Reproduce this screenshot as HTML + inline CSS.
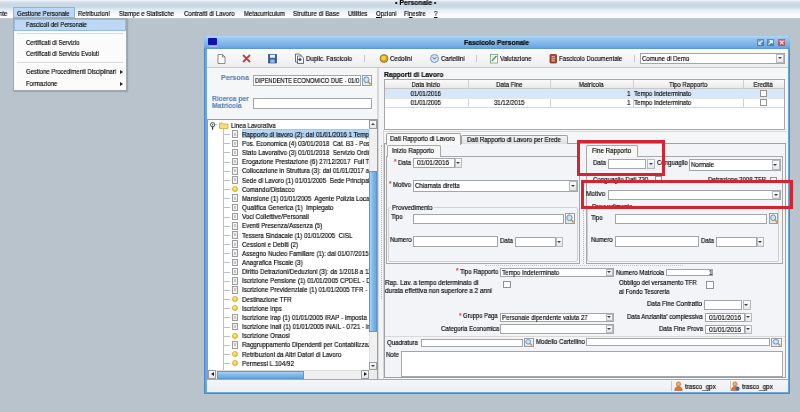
<!DOCTYPE html>
<html><head><meta charset="utf-8"><style>
*{margin:0;padding:0;box-sizing:border-box}
html,body{width:800px;height:412px;overflow:hidden}
body{position:relative;background:#b9c3cb;font-family:"Liberation Sans",sans-serif}
.a{position:absolute}
.t{position:absolute;white-space:pre;line-height:8px;font-size:7.0px;transform:scaleX(0.87);transform-origin:0 0;color:#000;will-change:transform;-webkit-text-stroke-width:0.15px}
.b{font-weight:bold}
.inp{position:absolute;background:#fff;border:1px solid #a2a5a9}
.btn{position:absolute;background:linear-gradient(#fdfdfd,#e2e4e6);border:1px solid #9a9ea3}
.dd{position:absolute;background:linear-gradient(#fcfcfc,#e6e7e9);border:1px solid #b6b9bd}
.dd:after{content:"";position:absolute;left:50%;top:50%;margin:-1.2px 0 0 -2.2px;border-left:2.2px solid transparent;border-right:2.2px solid transparent;border-top:2.6px solid #404040}
.chk{position:absolute;background:#fff;border:1px solid #8f9398}
</style></head><body>
<div style="position:absolute;left:0;top:0;width:800px;height:412px;filter:blur(0.3px)">
<div class="a" style="left:0px;top:0px;width:800.00px;height:18.00px;background:linear-gradient(#f4f8fc 0px,#d9e5ef 1.5px,#c8d8e5 4px,#ccdae6 7px,#e4ecf3 10px,#f6f9fc 14px,#fcfdfe 17px)"></div>
<div class="a" style="left:0px;top:17.5px;width:800.00px;height:1.00px;background:#c0c9d0"></div>
<div class="t b" style="left:394.50px;top:-1.10px;transform:scaleX(0.98)">• Personale •</div>
<div class="t" style="left:-1.00px;top:10.10px;transform:scaleX(0.855)">nte</div>
<div class="a" style="left:13px;top:7px;width:62.00px;height:11.00px;background:#bcd8f4;border:1px solid #8fb6dd"></div>
<div class="t" style="left:17.00px;top:10.10px;transform:scaleX(0.855)">Gestione Personale</div>
<div class="t" style="left:78.00px;top:10.10px;transform:scaleX(0.855)">Retribuzioni</div>
<div class="t" style="left:119.00px;top:10.10px;transform:scaleX(0.855)">Stampe e Statistiche</div>
<div class="t" style="left:184.00px;top:10.10px;transform:scaleX(0.885)">Contratti di Lavoro</div>
<div class="t" style="left:244.00px;top:10.10px;transform:scaleX(0.855)">Metacurriculum</div>
<div class="t" style="left:293.00px;top:10.10px;transform:scaleX(0.89)">Strutture di Base</div>
<div class="t" style="left:348.00px;top:10.10px;transform:scaleX(0.855)">Utilities</div>
<div class="t" style="left:376.00px;top:10.10px;transform:scaleX(0.855)"><u>O</u>pzioni</div>
<div class="t" style="left:404.00px;top:10.10px;transform:scaleX(0.855)">Fi<u>n</u>estre</div>
<div class="t" style="left:434.00px;top:10.10px"><u>?</u></div>
<div class="a" style="left:13px;top:18px;width:114.00px;height:73.00px;background:#fbfbfb;border:1px solid #a0a8b0;box-shadow:1px 1px 1px rgba(0,0,0,.15)"></div>
<div class="a" style="left:14px;top:19px;width:112.00px;height:11.50px;background:#bcd8f4;border:1px solid #94bbe2"></div>
<div class="t" style="left:26.00px;top:21.10px;transform:scaleX(0.845)">Fascicoli del Personale</div>
<div class="a" style="left:17px;top:33px;width:106.00px;height:1.00px;background:#dadada"></div>
<div class="t" style="left:26.00px;top:39.10px;transform:scaleX(0.845)">Certificati di Servizio</div>
<div class="t" style="left:26.00px;top:49.60px;transform:scaleX(0.845)">Certificati di Servizio Evoluti</div>
<div class="a" style="left:17px;top:62px;width:106.00px;height:1.00px;background:#dadada"></div>
<div class="t" style="left:26.00px;top:68.10px;transform:scaleX(0.845)">Gestione Procedimenti Disciplinari</div>
<div class="a" style="left:120px;top:70px;border-top:2px solid transparent;border-bottom:2px solid transparent;border-left:3px solid #222"></div>
<div class="t" style="left:26.00px;top:79.60px;transform:scaleX(0.845)">Formazione</div>
<div class="a" style="left:120px;top:81.5px;border-top:2px solid transparent;border-bottom:2px solid transparent;border-left:3px solid #222"></div>
<div class="a" style="left:204px;top:36px;width:586.00px;height:357.60px;background:#6aa6de;border:1px solid #5288c2;border-top:none;border-radius:2px 2px 0 0"></div>
<div class="a" style="left:204px;top:36px;width:586.00px;height:13.00px;background:linear-gradient(#b4d8f6,#96c6f0 20%,#82b9ea 55%,#6aa7df 88%,#5a92cc);border-radius:2px 2px 0 0"></div>
<div class="a" style="left:208px;top:37.8px;width:9.00px;height:6.80px;background:#1212a8;border-radius:1px"></div>
<div class="a" style="left:208.5px;top:44.6px;width:8.00px;height:2.40px;background:linear-gradient(#8a9ae0,#b0c8f0)"></div>
<div class="t b" style="left:464.00px;top:39.10px;transform:scaleX(0.96)">Fascicolo Personale</div>
<svg class="a" style="left:757px;top:39px" width="7" height="7" viewBox="0 0 7 7"><rect x="0" y="0" width="7" height="7" rx="1" fill="#4b7fb4"/><rect x=".5" y=".5" width="6" height="3" rx="1" fill="#6f9ccc"/><path d="M5.5 1.5L2 5M1.8 2.5v2.7h2.7" stroke="#e8f2fb" stroke-width="1.1" fill="none"/></svg>
<svg class="a" style="left:767px;top:39px" width="7" height="7" viewBox="0 0 7 7"><rect x="0" y="0" width="7" height="7" rx="1" fill="#4b7fb4"/><rect x=".5" y=".5" width="6" height="3" rx="1" fill="#6f9ccc"/><path d="M1.5 5.5L5 2M2.5 1.8h2.7v2.7" stroke="#ffffff" stroke-width="1.1" fill="none"/></svg>
<svg class="a" style="left:777.5px;top:39px" width="7.5" height="7" viewBox="0 0 7.5 7"><rect x="0" y="0" width="7.5" height="7" rx="1" fill="#b8505a"/><rect x=".5" y=".5" width="6.5" height="3" rx="1" fill="#cf7680"/><path d="M2 1.8l3.5 3.5M5.5 1.8l-3.5 3.5" stroke="#fbe8ea" stroke-width="1.2"/></svg>
<div class="a" style="left:207px;top:49px;width:581.00px;height:342.00px;background:#f5f6f8"></div>
<div class="a" style="left:207px;top:49px;width:581.00px;height:18.00px;background:linear-gradient(#fbfbfb,#eeeeee)"></div>
<div class="a" style="left:207px;top:67px;width:581.00px;height:1.00px;background:#c9c9c9"></div>
<svg class="a" style="left:216px;top:53px" width="11" height="11" viewBox="0 0 11 11"><path d="M2 1.5h4.5l2.5 2.5v6.5h-7z" fill="#fff" stroke="#707070" stroke-width=".8"/><path d="M6.5 1.5v2.5h2.5" fill="none" stroke="#707070" stroke-width=".8"/></svg>
<svg class="a" style="left:241px;top:53px" width="11" height="11" viewBox="0 0 11 11"><path d="M2 2l7 7M9 2l-7 7" stroke="#d23a3a" stroke-width="1.8"/></svg>
<svg class="a" style="left:267px;top:53px" width="11" height="11" viewBox="0 0 11 11"><rect x="1.5" y="1.5" width="8" height="8.5" fill="#2d5fa8" stroke="#1d3f78" stroke-width=".6"/><rect x="3" y="1.8" width="5" height="3" fill="#e8eef6"/><rect x="3.3" y="6.5" width="4.4" height="3.3" fill="#9fb9dc"/></svg>
<svg class="a" style="left:294px;top:53px" width="11" height="11" viewBox="0 0 11 11"><path d="M1.5 1h4l2 2v6h-6z" fill="#fff" stroke="#333" stroke-width=".7"/><path d="M3.5 3h4l2 2v5.5h-6z" fill="#fff" stroke="#333" stroke-width=".7"/><path d="M3.5 6.5h3M5.5 5l1.5 1.5-1.5 1.5" stroke="#1d4fb8" stroke-width="1.2" fill="none"/></svg>
<div class="t" style="left:305.50px;top:55.10px">Duplic. Fascicolo</div>
<div class="a" style="left:364px;top:55px;width:1.00px;height:7.00px;background:#c8c8c8"></div>
<svg class="a" style="left:379px;top:53px" width="10" height="11" viewBox="0 0 10 11"><circle cx="5" cy="5.5" r="4" fill="#d0a41c" stroke="#8a6810" stroke-width=".7"/><circle cx="4.6" cy="5" r="2.2" fill="#ecd060"/></svg>
<div class="t" style="left:390.00px;top:55.10px">Cedolini</div>
<svg class="a" style="left:429px;top:53px" width="11" height="11" viewBox="0 0 11 11"><circle cx="5.5" cy="5.5" r="4" fill="#d4e6f6" stroke="#6a8aaa" stroke-width=".9"/><path d="M3.8 4.2l1.7 2 1.8-2" stroke="#2a4a70" stroke-width=".8" fill="none"/></svg>
<div class="t" style="left:440.50px;top:55.10px">Cartellini</div>
<div class="a" style="left:476px;top:55px;width:1.00px;height:7.00px;background:#c8c8c8"></div>
<svg class="a" style="left:489px;top:53px" width="11" height="11" viewBox="0 0 11 11"><rect x="1.5" y="1.5" width="7" height="8.5" fill="#fff" stroke="#6d8a6d" stroke-width=".7"/><path d="M3 8l4.5-5" stroke="#3c9a3c" stroke-width="1.3"/><path d="M3 4h3M3 6h2" stroke="#9aa" stroke-width=".6"/></svg>
<div class="t" style="left:500.00px;top:55.10px">Valutazione</div>
<svg class="a" style="left:549px;top:53px" width="9" height="11" viewBox="0 0 9 11"><rect x="1" y="1.5" width="6.5" height="8.5" rx=".8" fill="#b5452c" stroke="#6e2412" stroke-width=".7"/><path d="M2.6 3.8h3.3M2.6 5.8h3.3M2.6 7.8h3.3" stroke="#f3d2c4" stroke-width=".9"/></svg>
<div class="t" style="left:558.50px;top:55.10px">Fascicolo Documentale</div>
<div class="a" style="left:634px;top:55px;width:1.00px;height:7.00px;background:#c8c8c8"></div>
<div class="inp" style="left:640px;top:53px;width:145.00px;height:11.00px;"></div>
<div class="dd" style="left:776px;top:54px;width:8.00px;height:9.00px;"></div>
<div class="t" style="left:642.00px;top:55.10px">Comune di Demo</div>
<div class="a" style="left:377px;top:68px;width:1.00px;height:312.00px;background:#d6d6d6"></div>
<div class="t b" style="left:221.00px;top:73.88px;font-size:7.5px;transform:scaleX(0.945);color:#6085b8">Persona</div>
<div class="inp" style="left:253px;top:75px;width:108.00px;height:11.00px;"></div>
<div class="t" style="left:255.00px;top:77.10px;transform:scaleX(0.816)">DIPENDENTE ECONOMICO DUE - 01/0</div>
<div class="btn" style="left:362px;top:75px;width:10.00px;height:11.00px;"></div>
<svg class="a" style="left:362px;top:75px" width="10" height="11" viewBox="0 0 10 10" preserveAspectRatio="none"><circle cx="4.4" cy="4.3" r="2.6" fill="#c6e4fa" stroke="#5a88b8" stroke-width=".9"/><path d="M6.2 6.1l2.3 2.4" stroke="#d8902e" stroke-width="1.4"/></svg>
<div class="t b" style="left:212.00px;top:94.97px;font-size:7.5px;transform:scaleX(0.9);color:#6085b8">Ricerca per</div>
<div class="t b" style="left:212.00px;top:102.17px;font-size:7.5px;transform:scaleX(0.9);color:#6085b8">Matricola</div>
<div class="inp" style="left:253px;top:98px;width:119.00px;height:10.50px;"></div>
<div class="a" style="left:207px;top:119px;width:171.00px;height:261.00px;background:#9c9c9c"></div>
<div class="a" style="left:208px;top:120px;width:169px;height:259px;background:#fff;overflow:hidden">
<div class="a" style="left:15px;top:9px;width:1.00px;height:241.00px;background:#b4c2d0"></div>
<svg class="a" style="left:1px;top:1px" width="9" height="9" viewBox="0 0 9 9"><circle cx="3.6" cy="3.7" r="2.1" fill="#fff" stroke="#333" stroke-width=".9"/><circle cx="3.6" cy="3.7" r=".7" fill="#555"/><path d="M3.6 5.8v3" stroke="#222" stroke-width="1.1"/><path d="M6.3 3.7h2" stroke="#aaa" stroke-width=".8"/></svg>
<svg class="a" style="left:11px;top:2px" width="10" height="7" viewBox="0 0 10 7"><path d="M.5 1h3l1 1h4.5v4.5h-8.5z" fill="#f6dc78" stroke="#c8a030" stroke-width=".7"/></svg>
<div class="t" style="left:22.60px;top:1.60px">Linea Lavorativa</div>
<div class="a" style="left:16px;top:14px;width:6.00px;height:1.00px;background:#b4c2d0"></div>
<div class="a" style="left:34px;top:9.2px;width:127.00px;height:9.20px;background:#b4d6f6;border:1px solid #a0c6ec"></div>
<div class="a" style="left:24px;top:10.36px;width:6.00px;height:7.60px;background:#f2f2f2;border:1px solid #9c9c9c"></div>
<div class="a" style="left:26px;top:12.66px;width:2.00px;height:3.00px;background:#c4c4c4"></div>
<div class="t" style="left:34.00px;top:10.76px;transform:scaleX(0.89)">Rapporto di lavoro (2): dal 01/01/2016 1 Tempo Indeterminato</div>
<div class="a" style="left:16px;top:23px;width:6.00px;height:1.00px;background:#b4c2d0"></div>
<div class="a" style="left:24px;top:19.52px;width:6.00px;height:7.60px;background:#f2f2f2;border:1px solid #9c9c9c"></div>
<div class="a" style="left:26px;top:21.82px;width:2.00px;height:3.00px;background:#c4c4c4"></div>
<div class="t" style="left:34.00px;top:19.92px;transform:scaleX(0.89)">Pos. Economica (4) 03/01/2018  Cat. B3 - Posizione</div>
<div class="a" style="left:16px;top:32px;width:6.00px;height:1.00px;background:#b4c2d0"></div>
<div class="a" style="left:24px;top:28.68px;width:6.00px;height:7.60px;background:#f2f2f2;border:1px solid #9c9c9c"></div>
<div class="a" style="left:26px;top:30.98px;width:2.00px;height:3.00px;background:#c4c4c4"></div>
<div class="t" style="left:34.00px;top:29.08px;transform:scaleX(0.89)">Stato Lavorativo (3) 01/01/2018  Servizio Ordinario</div>
<div class="a" style="left:16px;top:42px;width:6.00px;height:1.00px;background:#b4c2d0"></div>
<div class="a" style="left:24px;top:37.84px;width:6.00px;height:7.60px;background:#f2f2f2;border:1px solid #9c9c9c"></div>
<div class="a" style="left:26px;top:40.14px;width:2.00px;height:3.00px;background:#c4c4c4"></div>
<div class="t" style="left:34.00px;top:38.24px;transform:scaleX(0.89)">Erogazione Prestazione (6) 27/12/2017  Full Time</div>
<div class="a" style="left:16px;top:51px;width:6.00px;height:1.00px;background:#b4c2d0"></div>
<div class="a" style="left:24px;top:47.0px;width:6.00px;height:7.60px;background:#f2f2f2;border:1px solid #9c9c9c"></div>
<div class="a" style="left:26px;top:49.3px;width:2.00px;height:3.00px;background:#c4c4c4"></div>
<div class="t" style="left:34.00px;top:47.40px;transform:scaleX(0.89)">Collocazione in Struttura (3): dal 01/01/2017 al</div>
<div class="a" style="left:16px;top:60px;width:6.00px;height:1.00px;background:#b4c2d0"></div>
<div class="a" style="left:24px;top:56.16px;width:6.00px;height:7.60px;background:#f2f2f2;border:1px solid #9c9c9c"></div>
<div class="a" style="left:26px;top:58.46px;width:2.00px;height:3.00px;background:#c4c4c4"></div>
<div class="t" style="left:34.00px;top:56.56px;transform:scaleX(0.89)">Sede di Lavoro (1) 01/01/2005  Sede Principale</div>
<div class="a" style="left:16px;top:69px;width:6.00px;height:1.00px;background:#b4c2d0"></div>
<div class="a" style="left:24px;top:66.12px;width:6.00px;height:6.00px;border-radius:50%;background:radial-gradient(circle at 40% 35%,#fff0a0,#f6d040 55%,#eab828);border:0.5px solid #dcae30"></div>
<div class="t" style="left:34.00px;top:65.72px;transform:scaleX(0.89)">Comando/Distacco</div>
<div class="a" style="left:16px;top:78px;width:6.00px;height:1.00px;background:#b4c2d0"></div>
<div class="a" style="left:24px;top:74.48px;width:6.00px;height:7.60px;background:#f2f2f2;border:1px solid #9c9c9c"></div>
<div class="a" style="left:26px;top:76.78px;width:2.00px;height:3.00px;background:#c4c4c4"></div>
<div class="t" style="left:34.00px;top:74.88px;transform:scaleX(0.89)">Mansione (1) 01/01/2005  Agente Polizia Locale</div>
<div class="a" style="left:16px;top:87px;width:6.00px;height:1.00px;background:#b4c2d0"></div>
<div class="a" style="left:24px;top:83.64px;width:6.00px;height:7.60px;background:#f2f2f2;border:1px solid #9c9c9c"></div>
<div class="a" style="left:26px;top:85.94px;width:2.00px;height:3.00px;background:#c4c4c4"></div>
<div class="t" style="left:34.00px;top:84.04px;transform:scaleX(0.89)">Qualifica Generica (1)  Impiegato</div>
<div class="a" style="left:16px;top:97px;width:6.00px;height:1.00px;background:#b4c2d0"></div>
<div class="a" style="left:24px;top:92.8px;width:6.00px;height:7.60px;background:#f2f2f2;border:1px solid #9c9c9c"></div>
<div class="a" style="left:26px;top:95.1px;width:2.00px;height:3.00px;background:#c4c4c4"></div>
<div class="t" style="left:34.00px;top:93.20px;transform:scaleX(0.89)">Voci Collettive/Personali</div>
<div class="a" style="left:16px;top:106px;width:6.00px;height:1.00px;background:#b4c2d0"></div>
<div class="a" style="left:24px;top:101.96px;width:6.00px;height:7.60px;background:#f2f2f2;border:1px solid #9c9c9c"></div>
<div class="a" style="left:26px;top:104.26px;width:2.00px;height:3.00px;background:#c4c4c4"></div>
<div class="t" style="left:34.00px;top:102.36px;transform:scaleX(0.89)">Eventi Presenza/Assenza (5)</div>
<div class="a" style="left:16px;top:115px;width:6.00px;height:1.00px;background:#b4c2d0"></div>
<div class="a" style="left:24px;top:111.12px;width:6.00px;height:7.60px;background:#f2f2f2;border:1px solid #9c9c9c"></div>
<div class="a" style="left:26px;top:113.42px;width:2.00px;height:3.00px;background:#c4c4c4"></div>
<div class="t" style="left:34.00px;top:111.52px;transform:scaleX(0.89)">Tessera Sindacale (1) 01/01/2005  CISL</div>
<div class="a" style="left:16px;top:124px;width:6.00px;height:1.00px;background:#b4c2d0"></div>
<div class="a" style="left:24px;top:120.27px;width:6.00px;height:7.61px;background:#f2f2f2;border:1px solid #9c9c9c"></div>
<div class="a" style="left:26px;top:122.57px;width:2.00px;height:3.00px;background:#c4c4c4"></div>
<div class="t" style="left:34.00px;top:120.67px;transform:scaleX(0.89)">Cessioni e Debiti (2)</div>
<div class="a" style="left:16px;top:133px;width:6.00px;height:1.00px;background:#b4c2d0"></div>
<div class="a" style="left:24px;top:129.43px;width:6.00px;height:7.60px;background:#f2f2f2;border:1px solid #9c9c9c"></div>
<div class="a" style="left:26px;top:131.73px;width:2.00px;height:3.00px;background:#c4c4c4"></div>
<div class="t" style="left:34.00px;top:129.83px;transform:scaleX(0.89)">Assegno Nucleo Familiare (1): dal 01/07/2015 al</div>
<div class="a" style="left:16px;top:142px;width:6.00px;height:1.00px;background:#b4c2d0"></div>
<div class="a" style="left:24px;top:138.59px;width:6.00px;height:7.60px;background:#f2f2f2;border:1px solid #9c9c9c"></div>
<div class="a" style="left:26px;top:140.89px;width:2.00px;height:3.00px;background:#c4c4c4"></div>
<div class="t" style="left:34.00px;top:138.99px;transform:scaleX(0.89)">Anagrafica Fiscale (3)</div>
<div class="a" style="left:16px;top:152px;width:6.00px;height:1.00px;background:#b4c2d0"></div>
<div class="a" style="left:24px;top:147.75px;width:6.00px;height:7.60px;background:#f2f2f2;border:1px solid #9c9c9c"></div>
<div class="a" style="left:26px;top:150.05px;width:2.00px;height:3.00px;background:#c4c4c4"></div>
<div class="t" style="left:34.00px;top:148.15px;transform:scaleX(0.89)">Diritto Detrazioni/Deduzioni (3): da 1/2018 a 12/2018</div>
<div class="a" style="left:16px;top:161px;width:6.00px;height:1.00px;background:#b4c2d0"></div>
<div class="a" style="left:24px;top:156.91px;width:6.00px;height:7.60px;background:#f2f2f2;border:1px solid #9c9c9c"></div>
<div class="a" style="left:26px;top:159.21px;width:2.00px;height:3.00px;background:#c4c4c4"></div>
<div class="t" style="left:34.00px;top:157.31px;transform:scaleX(0.89)">Iscrizione Pensione (1) 01/01/2005 CPDEL - Dipendenti</div>
<div class="a" style="left:16px;top:170px;width:6.00px;height:1.00px;background:#b4c2d0"></div>
<div class="a" style="left:24px;top:166.07px;width:6.00px;height:7.60px;background:#f2f2f2;border:1px solid #9c9c9c"></div>
<div class="a" style="left:26px;top:168.37px;width:2.00px;height:3.00px;background:#c4c4c4"></div>
<div class="t" style="left:34.00px;top:166.47px;transform:scaleX(0.89)">Iscrizione Previdenziale (1) 01/01/2005 TFR - Comparto</div>
<div class="a" style="left:16px;top:179px;width:6.00px;height:1.00px;background:#b4c2d0"></div>
<div class="a" style="left:24px;top:176.03px;width:6.00px;height:6.00px;border-radius:50%;background:radial-gradient(circle at 40% 35%,#fff0a0,#f6d040 55%,#eab828);border:0.5px solid #dcae30"></div>
<div class="t" style="left:34.00px;top:175.63px;transform:scaleX(0.89)">Destinazione TFR</div>
<div class="a" style="left:16px;top:188px;width:6.00px;height:1.00px;background:#b4c2d0"></div>
<div class="a" style="left:24px;top:185.19px;width:6.00px;height:6.00px;border-radius:50%;background:radial-gradient(circle at 40% 35%,#fff0a0,#f6d040 55%,#eab828);border:0.5px solid #dcae30"></div>
<div class="t" style="left:34.00px;top:184.79px;transform:scaleX(0.89)">Iscrizione Inps</div>
<div class="a" style="left:16px;top:197px;width:6.00px;height:1.00px;background:#b4c2d0"></div>
<div class="a" style="left:24px;top:193.55px;width:6.00px;height:7.60px;background:#f2f2f2;border:1px solid #9c9c9c"></div>
<div class="a" style="left:26px;top:195.85px;width:2.00px;height:3.00px;background:#c4c4c4"></div>
<div class="t" style="left:34.00px;top:193.95px;transform:scaleX(0.89)">Iscrizione Irap (1) 01/01/2005 IRAP - Imposta</div>
<div class="a" style="left:16px;top:207px;width:6.00px;height:1.00px;background:#b4c2d0"></div>
<div class="a" style="left:24px;top:202.71px;width:6.00px;height:7.60px;background:#f2f2f2;border:1px solid #9c9c9c"></div>
<div class="a" style="left:26px;top:205.01px;width:2.00px;height:3.00px;background:#c4c4c4"></div>
<div class="t" style="left:34.00px;top:203.11px;transform:scaleX(0.89)">Iscrizione Inail (1) 01/01/2005 INAIL - 0721 - Impiegati</div>
<div class="a" style="left:16px;top:216px;width:6.00px;height:1.00px;background:#b4c2d0"></div>
<div class="a" style="left:24px;top:212.67px;width:6.00px;height:6.00px;border-radius:50%;background:radial-gradient(circle at 40% 35%,#fff0a0,#f6d040 55%,#eab828);border:0.5px solid #dcae30"></div>
<div class="t" style="left:34.00px;top:212.27px;transform:scaleX(0.89)">Iscrizione Onaosi</div>
<div class="a" style="left:16px;top:225px;width:6.00px;height:1.00px;background:#b4c2d0"></div>
<div class="a" style="left:24px;top:221.03px;width:6.00px;height:7.60px;background:#f2f2f2;border:1px solid #9c9c9c"></div>
<div class="a" style="left:26px;top:223.33px;width:2.00px;height:3.00px;background:#c4c4c4"></div>
<div class="t" style="left:34.00px;top:221.43px;transform:scaleX(0.89)">Raggruppamento Dipendenti per Contabilizzazione</div>
<div class="a" style="left:16px;top:234px;width:6.00px;height:1.00px;background:#b4c2d0"></div>
<div class="a" style="left:24px;top:230.99px;width:6.00px;height:6.00px;border-radius:50%;background:radial-gradient(circle at 40% 35%,#fff0a0,#f6d040 55%,#eab828);border:0.5px solid #dcae30"></div>
<div class="t" style="left:34.00px;top:230.59px;transform:scaleX(0.89)">Retribuzioni da Altri Datori di Lavoro</div>
<div class="a" style="left:16px;top:243px;width:6.00px;height:1.00px;background:#b4c2d0"></div>
<div class="a" style="left:24px;top:240.15px;width:6.00px;height:6.00px;border-radius:50%;background:radial-gradient(circle at 40% 35%,#fff0a0,#f6d040 55%,#eab828);border:0.5px solid #dcae30"></div>
<div class="t" style="left:34.00px;top:239.75px;transform:scaleX(0.89)">Permessi L.104/92</div>
<div class="a" style="left:161px;top:0px;width:8.00px;height:250.00px;background:#f0f0f0;border-left:1px solid #e0e0e0"></div>
<div class="btn" style="left:161px;top:0px;width:8px;height:9px"></div>
<div class="a" style="left:162.5px;top:3px;border-left:2.5px solid transparent;border-right:2.5px solid transparent;border-bottom:2.5px solid #444"></div>
<div class="a" style="left:161px;top:50.5px;width:8.00px;height:161.50px;background:linear-gradient(90deg,#a8d4f6,#7ab8ec 50%,#6aa8e0);border:1px solid #5a98d0"></div>
<div class="btn" style="left:161px;top:242px;width:8px;height:8px"></div>
<div class="a" style="left:162.5px;top:244.5px;border-left:2.5px solid transparent;border-right:2.5px solid transparent;border-top:2.5px solid #444"></div>
<div class="a" style="left:0px;top:250px;width:161.00px;height:9.00px;background:#f0f0f0;border-top:1px solid #e0e0e0"></div>
<div class="btn" style="left:0px;top:250px;width:8px;height:9px"></div>
<div class="a" style="left:2.5px;top:251.8px;border-top:2.5px solid transparent;border-bottom:2.5px solid transparent;border-right:3px solid #222"></div>
<div class="a" style="left:8.5px;top:250.5px;width:87.00px;height:8.00px;background:linear-gradient(#a8d4f6,#7ab8ec 50%,#6aa8e0);border:1px solid #5a98d0"></div>
<div class="btn" style="left:152.5px;top:250px;width:8px;height:9px"></div>
<div class="a" style="left:155.5px;top:251.8px;border-top:2.5px solid transparent;border-bottom:2.5px solid transparent;border-left:3px solid #222"></div>
<div class="a" style="left:160.5px;top:250px;width:8.50px;height:9.00px;background:#ececec"></div>
</div>
<div class="a" style="left:378px;top:68px;width:6.00px;height:312.00px;background:#f3f4f6;border-left:1px solid #dadada"></div>
<div class="a" style="left:380.5px;top:145px;width:1px;height:154px;border-left:1px dotted #b8b8b8"></div>
<div class="a" style="left:383px;top:130px;width:1.00px;height:250.00px;background:#d4d4d4"></div>
<div class="t b" style="left:384.00px;top:70.60px;transform:scaleX(0.956)">Rapporti di Lavoro</div>
<div class="a" style="left:384px;top:78.5px;width:401.00px;height:51.50px;background:#fff;border:1px solid #a8a8a8"></div>
<div class="a" style="left:385px;top:79.5px;width:399.00px;height:9.50px;background:linear-gradient(#fbfbfb,#e9e9e9);border-bottom:1px solid #c8c8c8"></div>
<div class="a" style="left:467.5px;top:79.5px;width:1.00px;height:28.00px;background:#d0d0d0"></div>
<div class="a" style="left:550px;top:79.5px;width:1.00px;height:28.00px;background:#d0d0d0"></div>
<div class="a" style="left:632.5px;top:79.5px;width:1.00px;height:28.00px;background:#d0d0d0"></div>
<div class="a" style="left:743px;top:79.5px;width:1.00px;height:28.00px;background:#d0d0d0"></div>
<div class="a" style="left:385px;top:89px;width:399.00px;height:9.00px;background:#d7e7fa"></div>
<div class="a" style="left:385px;top:107px;width:399.00px;height:1.00px;background:#d8d8d8"></div>
<div class="a" style="left:385px;top:98px;width:399.00px;height:0.60px;background:#e6e6e6"></div>
<div class="t" style="left:384px;top:80.60px;width:95.98px;text-align:center">Data Inizio</div>
<div class="t" style="left:467.5px;top:80.60px;width:94.83px;text-align:center">Data Fine</div>
<div class="t" style="left:550px;top:80.60px;width:94.83px;text-align:center">Matricola</div>
<div class="t" style="left:632.5px;top:80.60px;width:127.01px;text-align:center">Tipo Rapporto</div>
<div class="t" style="left:743px;top:80.60px;width:45.98px;text-align:center">Eredità</div>
<div class="t" style="left:384px;top:90.10px;width:95.98px;text-align:center">01/01/2016</div>
<div class="t" style="left:627.30px;top:90.10px">1</div>
<div class="t" style="left:633.50px;top:90.10px">Tempo Indeterminato</div>
<div class="chk" style="left:760px;top:90.2px;width:7.00px;height:6.60px"></div>
<div class="t" style="left:384px;top:99.30px;width:95.98px;text-align:center">01/01/2005</div>
<div class="t" style="left:467.5px;top:99.30px;width:94.83px;text-align:center">31/12/2015</div>
<div class="t" style="left:627.30px;top:99.30px">1</div>
<div class="t" style="left:633.50px;top:99.30px">Tempo Indeterminato</div>
<div class="chk" style="left:760px;top:99.4px;width:7.00px;height:6.60px"></div>
<div class="a" style="left:384px;top:130.8px;width:402.00px;height:0.80px;background:#d6d8db"></div>
<div class="a" style="left:384px;top:143px;width:402.00px;height:235.00px;background:#f3f4f7;border:1px solid #a0a0a0"></div>
<div class="a" style="left:460.5px;top:134.5px;width:107.00px;height:9.50px;background:linear-gradient(#f4f4f4,#dedede);border:1px solid #a0a0a0;border-bottom:none;border-radius:2px 2px 0 0"></div>
<div class="a" style="left:385.5px;top:132.5px;width:75.50px;height:12.00px;background:#f7f7f7;border:1px solid #a0a0a0;border-bottom:none;border-radius:2px 2px 0 0"></div>
<div class="t" style="left:390.00px;top:135.10px;transform:scaleX(0.878)">Dati Rapporto di Lavoro</div>
<div class="t" style="left:466.75px;top:136.10px;transform:scaleX(0.881)">Dati Rapporto di Lavoro per Erede</div>
<div class="a" style="left:386px;top:156px;width:193.50px;height:107.50px;background:#f3f4f7;border:1px solid #a8a8a8"></div>
<div class="a" style="left:387px;top:145px;width:53.50px;height:11.50px;background:#f7f7f7;border:1px solid #a8a8a8;border-bottom:none;border-radius:2px 2px 0 0"></div>
<div class="t" style="left:391.90px;top:147.10px;transform:scaleX(0.89)">Inizio Rapporto</div>
<div class="t" style="left:393.50px;top:157.60px;color:#d03030">*</div>
<div class="t" style="left:397.50px;top:158.60px">Data</div>
<div class="inp" style="left:413px;top:157.5px;width:41.50px;height:10.50px;"></div>
<div class="dd" style="left:455.0px;top:157.5px;width:6.50px;height:10.50px;"></div>
<div class="t" style="left:416.50px;top:159.35px;transform:scaleX(0.914)">01/01/2016</div>
<div class="t" style="left:388.50px;top:180.10px;color:#d03030">*</div>
<div class="t" style="left:392.50px;top:181.10px">Motivo</div>
<div class="inp" style="left:413px;top:180px;width:165.00px;height:11.50px;"></div>
<div class="dd" style="left:569px;top:181px;width:8.00px;height:9.50px;"></div>
<div class="t" style="left:415.00px;top:182.35px">Chiamata diretta</div>
<div class="a" style="left:387.5px;top:207px;width:190.50px;height:54.50px;border:1px solid #d0d0d0;border-radius:2px"></div>
<div class="a" style="left:390px;top:203px;width:44.00px;height:7.00px;background:#f3f4f7"></div>
<div class="t" style="left:391.50px;top:203.60px">Provvedimento</div>
<div class="t" style="left:391.00px;top:213.40px">Tipo</div>
<div class="inp" style="left:413px;top:213.5px;width:151.00px;height:10.50px;"></div>
<div class="btn" style="left:565px;top:213px;width:10.00px;height:11.00px;"></div>
<svg class="a" style="left:565px;top:213px" width="10" height="11" viewBox="0 0 10 10" preserveAspectRatio="none"><circle cx="4.4" cy="4.3" r="2.6" fill="#c6e4fa" stroke="#5a88b8" stroke-width=".9"/><path d="M6.2 6.1l2.3 2.4" stroke="#d8902e" stroke-width="1.4"/></svg>
<div class="t" style="left:390.00px;top:236.10px">Numero</div>
<div class="inp" style="left:413px;top:236.2px;width:84.50px;height:10.80px;"></div>
<div class="t" style="left:499.50px;top:236.60px">Data</div>
<div class="inp" style="left:515px;top:237px;width:40.50px;height:10.00px;"></div>
<div class="dd" style="left:556.0px;top:237px;width:7.00px;height:10.00px;"></div>
<div class="a" style="left:583px;top:210px;width:1px;height:54px;border-left:1px dotted #b8b8b8"></div>
<div class="a" style="left:485px;top:265px;width:198px;height:1px;border-top:1px dotted #c4c4c4"></div>
<div class="a" style="left:585.5px;top:156px;width:197.00px;height:107.50px;background:#f3f4f7;border:1px solid #a8a8a8"></div>
<div class="a" style="left:586px;top:145px;width:51.50px;height:11.50px;background:#f7f7f7;border:1px solid #a8a8a8;border-bottom:none;border-radius:2px 2px 0 0"></div>
<div class="t" style="left:591.90px;top:147.10px;transform:scaleX(0.88)">Fine Rapporto</div>
<div class="t" style="left:592.50px;top:159.10px">Data</div>
<div class="inp" style="left:607.5px;top:158.5px;width:38.50px;height:10.50px;"></div>
<div class="dd" style="left:646.5px;top:158.5px;width:8.50px;height:10.50px;"></div>
<div class="t" style="left:657.00px;top:158.60px">Conguaglio</div>
<div class="inp" style="left:688.5px;top:158.5px;width:92.00px;height:12.50px;"></div>
<div class="dd" style="left:771.5px;top:159.5px;width:8.00px;height:10.50px;"></div>
<div class="t" style="left:690.50px;top:161.35px">Normale</div>
<div class="t" style="left:592.50px;top:176.10px">Conguaglio Dati 730</div>
<div class="chk" style="left:655px;top:176px;width:7.00px;height:7.00px"></div>
<div class="t" style="left:707.50px;top:176.10px">Detrazione 2008 TFR</div>
<div class="chk" style="left:770px;top:176.5px;width:7.00px;height:6.50px"></div>
<div class="t" style="left:586.30px;top:190.40px;transform:scaleX(0.93)">Motivo</div>
<div class="inp" style="left:607.5px;top:189.5px;width:173.50px;height:10.50px;"></div>
<div class="dd" style="left:772px;top:190.5px;width:8.00px;height:8.50px;"></div>
<div class="a" style="left:586.5px;top:206px;width:192.50px;height:56.00px;border:1px solid #d0d0d0;border-radius:2px"></div>
<div class="a" style="left:589px;top:202px;width:45.00px;height:7.00px;background:#f3f4f7"></div>
<div class="t" style="left:591.50px;top:202.90px">Provvedimento</div>
<div class="t" style="left:591.00px;top:213.60px">Tipo</div>
<div class="inp" style="left:614.5px;top:213.5px;width:152.50px;height:10.50px;"></div>
<div class="btn" style="left:768.5px;top:213px;width:9.50px;height:11.00px;"></div>
<svg class="a" style="left:768.5px;top:213px" width="9.5" height="11" viewBox="0 0 10 10" preserveAspectRatio="none"><circle cx="4.4" cy="4.3" r="2.6" fill="#c6e4fa" stroke="#5a88b8" stroke-width=".9"/><path d="M6.2 6.1l2.3 2.4" stroke="#d8902e" stroke-width="1.4"/></svg>
<div class="t" style="left:590.50px;top:236.10px">Numero</div>
<div class="inp" style="left:614.5px;top:236.2px;width:84.50px;height:10.80px;"></div>
<div class="t" style="left:700.50px;top:236.60px">Data</div>
<div class="inp" style="left:715.5px;top:237px;width:41.00px;height:10.00px;"></div>
<div class="dd" style="left:757.0px;top:237px;width:7.00px;height:10.00px;"></div>
<div class="t" style="left:455.50px;top:267.10px;color:#d03030">*</div>
<div class="t" style="left:459.50px;top:267.90px">Tipo Rapporto</div>
<div class="inp" style="left:500px;top:268px;width:114.00px;height:8.50px;"></div>
<div class="dd" style="left:606px;top:269px;width:7.00px;height:6.50px;"></div>
<div class="t" style="left:502.00px;top:268.85px">Tempo Indeterminato</div>
<div class="t" style="left:615.50px;top:269.10px">Numero Matricola</div>
<div class="inp" style="left:665.5px;top:268.5px;width:47.00px;height:7.50px;"></div>
<div class="t" style="left:708.50px;top:268.90px">1</div>
<div class="t" style="left:385.00px;top:278.74px;font-size:6.7px;transform:scaleX(0.95)">Rap. Lav. a tempo determinato di</div>
<div class="t" style="left:385.00px;top:287.24px;font-size:6.7px;transform:scaleX(0.95)">durata effettiva non superiore a 2 anni</div>
<div class="chk" style="left:503px;top:280.5px;width:7.50px;height:7.50px"></div>
<div class="t" style="left:619.00px;top:279.10px">Obbligo del versamento TFR</div>
<div class="t" style="left:619.00px;top:287.80px">al Fondo Tesoreria</div>
<div class="chk" style="left:706px;top:281px;width:7.50px;height:7.50px"></div>
<div class="t" style="left:647.00px;top:300.40px;transform:scaleX(0.9)">Data Fine Contratto</div>
<div class="inp" style="left:703.5px;top:300px;width:38.50px;height:9.50px;"></div>
<div class="dd" style="left:742.5px;top:300px;width:8.00px;height:9.50px;"></div>
<div class="t" style="left:459.00px;top:311.60px;color:#d03030">*</div>
<div class="t" style="left:463.00px;top:312.40px;transform:scaleX(0.833)">Gruppo Paga</div>
<div class="inp" style="left:500px;top:312.5px;width:114.00px;height:9.00px;"></div>
<div class="dd" style="left:606px;top:313.5px;width:7.00px;height:7.00px;"></div>
<div class="t" style="left:502.00px;top:313.60px">Personale dipendente valuta 27</div>
<div class="t" style="left:627.00px;top:312.90px">Data Anzianita' complessiva</div>
<div class="inp" style="left:705px;top:313px;width:39.50px;height:8.50px;"></div>
<div class="dd" style="left:745.0px;top:313px;width:7.00px;height:8.50px;"></div>
<div class="t" style="left:708.50px;top:313.85px;transform:scaleX(0.914)">01/01/2016</div>
<div class="t" style="left:441.00px;top:324.60px">Categoria Economica</div>
<div class="inp" style="left:500px;top:324.2px;width:114.00px;height:9.80px;"></div>
<div class="dd" style="left:606px;top:325.2px;width:7.00px;height:7.80px;"></div>
<div class="t" style="left:658.50px;top:325.40px">Data Fine Prova</div>
<div class="inp" style="left:705px;top:325px;width:39.50px;height:8.50px;"></div>
<div class="dd" style="left:745.0px;top:325px;width:7.00px;height:8.50px;"></div>
<div class="t" style="left:708.50px;top:325.85px;transform:scaleX(0.914)">01/01/2016</div>
<div class="a" style="left:385px;top:336px;width:400.00px;height:1.00px;background:#d8d8d8"></div>
<div class="t" style="left:387.00px;top:338.60px">Quadratura</div>
<div class="inp" style="left:420.5px;top:338.5px;width:102.00px;height:8.00px;"></div>
<div class="btn" style="left:524.3px;top:338px;width:9.50px;height:8.80px;"></div>
<svg class="a" style="left:524.3px;top:338px" width="9.5" height="8.800000000000011" viewBox="0 0 10 10" preserveAspectRatio="none"><circle cx="4.4" cy="4.3" r="2.6" fill="#c6e4fa" stroke="#5a88b8" stroke-width=".9"/><path d="M6.2 6.1l2.3 2.4" stroke="#d8902e" stroke-width="1.4"/></svg>
<div class="t" style="left:535.60px;top:338.40px">Modello Cartellino</div>
<div class="inp" style="left:586px;top:338.2px;width:183.50px;height:8.30px;"></div>
<div class="btn" style="left:771px;top:338px;width:11.00px;height:8.80px;"></div>
<svg class="a" style="left:771px;top:338px" width="11" height="8.800000000000011" viewBox="0 0 10 10" preserveAspectRatio="none"><circle cx="4.4" cy="4.3" r="2.6" fill="#c6e4fa" stroke="#5a88b8" stroke-width=".9"/><path d="M6.2 6.1l2.3 2.4" stroke="#d8902e" stroke-width="1.4"/></svg>
<div class="t" style="left:385.50px;top:351.10px">Note</div>
<div class="inp" style="left:401px;top:351px;width:382.00px;height:25.50px;"></div>
<div class="a" style="left:207px;top:379.3px;width:581.00px;height:12.00px;background:linear-gradient(#f4f5f8,#eeeff3);border-top:1px solid #a9a9a9"></div>
<div class="a" style="left:207px;top:391px;width:581.00px;height:0.60px;background:#e8f4fc"></div>
<div class="a" style="left:671px;top:380.5px;width:1.00px;height:10.50px;background:#c8c8c8"></div>
<div class="a" style="left:729.5px;top:380.5px;width:1.00px;height:10.50px;background:#c8c8c8"></div>
<svg class="a" style="left:674px;top:381px" width="9" height="10" viewBox="0 0 9 10"><circle cx="4.5" cy="3" r="2.2" fill="#f0a860" stroke="#b06020" stroke-width=".5"/><path d="M.8 9.5c0-3 1.6-4 3.7-4s3.7 1 3.7 4z" fill="#e8742a" stroke="#a04a10" stroke-width=".5"/></svg>
<div class="t" style="left:684.50px;top:383.10px;transform:scaleX(0.9)">trasco_gpx</div>
<svg class="a" style="left:731px;top:381px" width="9" height="10" viewBox="0 0 9 10"><circle cx="4" cy="3" r="2.2" fill="#f0a860" stroke="#b06020" stroke-width=".5"/><path d="M.5 9.5c0-3 1.5-4 3.5-4s3.5 1 3.5 4z" fill="#e8742a" stroke="#a04a10" stroke-width=".5"/><circle cx="6.5" cy="7.5" r="2" fill="#2a6ad0"/></svg>
<div class="t" style="left:742.30px;top:383.10px;transform:scaleX(0.9)">trasco_gpx</div>
<div class="a" style="left:577px;top:140px;width:87.50px;height:35.50px;border:3px solid #d3242f"></div>
<div class="a" style="left:581px;top:180px;width:211.50px;height:28.80px;border:3px solid #d3242f"></div>
</div>
</body></html>
